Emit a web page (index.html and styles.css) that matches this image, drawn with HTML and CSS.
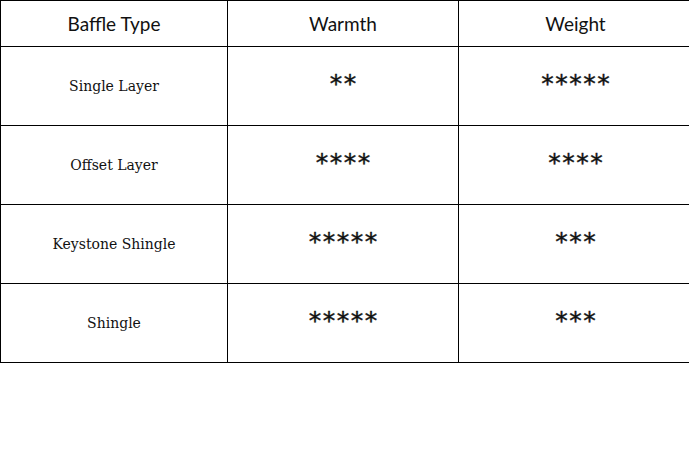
FILE: index.html
```html
<!DOCTYPE html>
<html>
<head>
<meta charset="utf-8">
<link rel="stylesheet" href="styles.css">
</head>
<body>
<table class="baffles">
  <thead>
    <tr><th class="c1">Baffle Type</th><th class="c2">Warmth</th><th class="c3">Weight</th></tr>
  </thead>
  <tbody>
    <tr><td class="name">Single Layer</td><td class="stars">**</td><td class="stars">*****</td></tr>
    <tr><td class="name">Offset Layer</td><td class="stars">****</td><td class="stars">****</td></tr>
    <tr><td class="name">Keystone Shingle</td><td class="stars">*****</td><td class="stars">***</td></tr>
    <tr><td class="name">Shingle</td><td class="stars">*****</td><td class="stars">***</td></tr>
  </tbody>
</table>
</body>
</html>
```
FILE: styles.css
```css
html, body {
  margin: 0;
  padding: 0;
  background: #fff;
}
.baffles {
  border-collapse: collapse;
  width: 689px;
  table-layout: fixed;
  color: #111;
}
.baffles th, .baffles td {
  border: 1px solid #000;
  text-align: center;
  vertical-align: middle;
  padding: 0;
}
.baffles th {
  height: 45px;
  font-family: "Lato", "DejaVu Sans", sans-serif;
  font-weight: 400;
  font-size: 19px;
}
.c1 { width: 226px; }
.c2 { width: 230px; }
.c3 { width: 233px; }
.baffles td {
  height: 78px;
}
.name {
  font-family: "DejaVu Serif", "Liberation Serif", serif;
  font-size: 14px;
}
.baffles .stars {
  font-family: "DejaVu Sans", sans-serif;
  font-size: 25px;
  font-weight: 400;
  letter-spacing: 1.5px;
  text-indent: 1.5px;
  line-height: 1;
  height: 72px;
  padding-bottom: 6px;
  -webkit-text-stroke: 0.4px #111;
}
```
